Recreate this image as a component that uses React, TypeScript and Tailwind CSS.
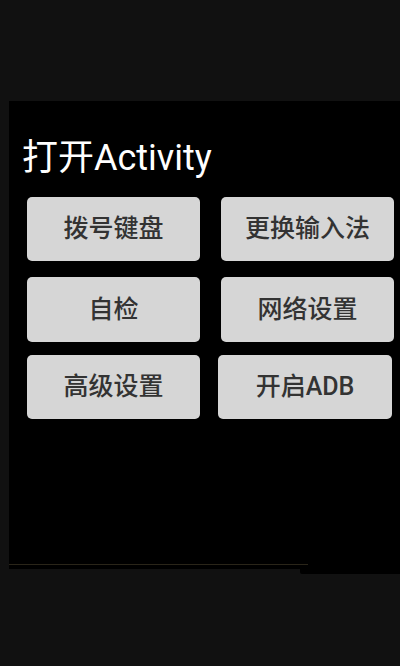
import React from "react";

const font = { fontFamily: '"Roboto", "Noto Sans CJK SC", sans-serif' };

function Btn({ label, w = "w-[173px]", h = "h-[64px]" }: { label: string; w?: string; h?: string }) {
  return (
    <div
      className={`${w} ${h} flex items-center justify-center rounded-[5px] bg-[#d6d6d6] text-[25px] font-medium text-[#333333]`}
    >
      {label}
    </div>
  );
}

export default function App() {
  return (
    <div className="w-[400px] h-[666px] bg-[#111111] pt-[101px] pl-[9px] overflow-hidden" style={font}>
      <div className="bg-black h-[463px] flex flex-col">
        <div className="pl-[13px] pt-[39px] h-[96px] text-[36px] leading-none text-white">打开Activity</div>
        <div className="flex flex-col pl-[18px]">
          <div className="flex gap-[21px]">
            <Btn label="拨号键盘" />
            <Btn label="更换输入法" />
          </div>
          <div className="flex gap-[21px] mt-[16px]">
            <Btn label="自检" h="h-[65px]" />
            <Btn label="网络设置" h="h-[65px]" />
          </div>
          <div className="flex gap-[18px] mt-[13px]">
            <Btn label="高级设置" />
            <Btn label="开启ADB" w="w-[174px]" />
          </div>
        </div>
      </div>
      <div className="flex h-px">
        <div className="w-[299px] bg-[#2a2519]" />
        <div className="flex-1 bg-black" />
      </div>
      <div className="h-[4px] bg-black" />
      <div className="flex h-[5px]">
        <div className="w-[291px]" />
        <div className="flex-1 bg-black rounded-bl-[2px]" />
      </div>
    </div>
  );
}
